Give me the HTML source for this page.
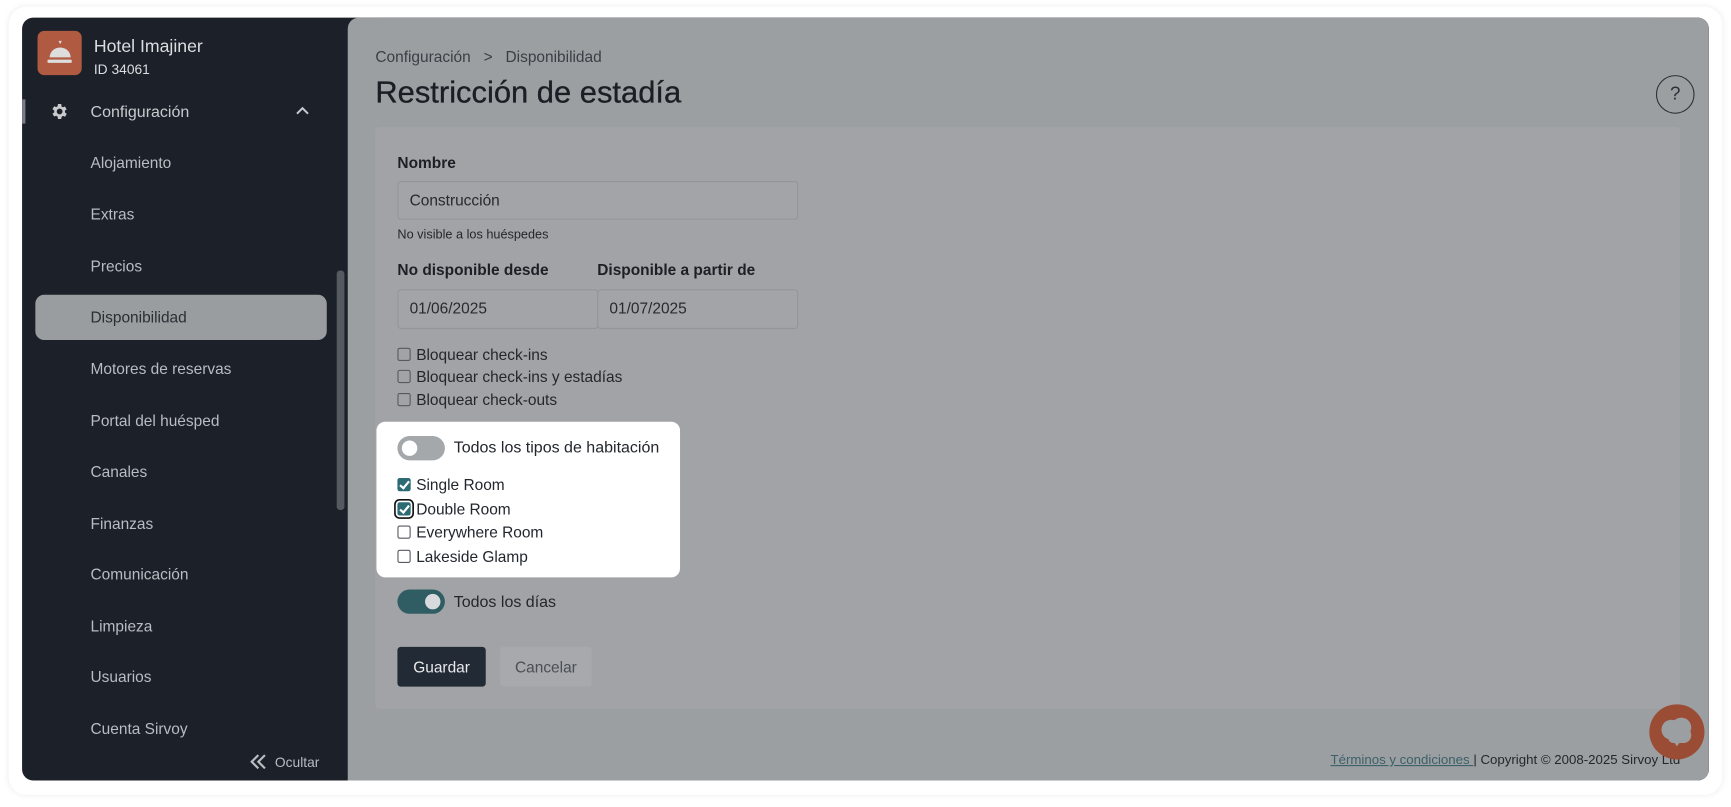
<!DOCTYPE html>
<html><head><meta charset="utf-8"><style>
*{box-sizing:border-box;margin:0;padding:0}
html,body{width:1731px;height:807px;overflow:hidden;background:#fff;font-family:"Liberation Sans",sans-serif}
#w{position:absolute;left:0;top:0;width:1568px;height:731px;transform:scale(1.10395);transform-origin:0 0}
.abs{position:absolute}
.outer{left:8px;top:6px;width:1552px;height:714px;border-radius:16px;background:#fff;box-shadow:0 0 6px rgba(0,0,0,.08)}
.frame{left:20px;top:16px;width:1528px;height:691px;border-radius:10px;background:#1b2029;overflow:hidden}
.main{left:295px;top:0;width:1233px;height:691px;background:#9c9fa2;border-radius:10px 0 0 0}
.mi{position:absolute;left:62px;font-size:14px;color:#b9bcc0;line-height:16px}
.lbl{position:absolute;font-size:14px;font-weight:bold;color:#1c2026}
.inp{position:absolute;background:#a3a4a7;border:1px solid #939699;border-radius:3px;font-size:14px;color:#262a30;padding-left:10px;line-height:33px}
.cb{position:absolute;font-size:14px;color:#23272d;line-height:16px}
.cb i{position:absolute;left:-17px;top:2px;width:12px;height:12px;border:1px solid #555a60;border-radius:2px;background:transparent}
.cb i.on{background:#2c6a74;border-color:#2c6a74}
.cb i.on:after{content:"";position:absolute;left:3px;top:0px;width:3px;height:7px;border:solid #fff;border-width:0 2px 2px 0;transform:rotate(40deg)}
</style></head><body><div id="w">
<div class="abs outer"></div>
<div class="abs frame">
 <div class="abs" style="left:14px;top:12px;width:40px;height:40px;border-radius:6px;background:#b05a42">
  <svg width="40" height="40" viewBox="0 0 40 40"><path d="M19 9h3l-1.5 3z" fill="#ddd"/><path d="M11 24a9.5 9 0 0 1 19 0z" fill="#ddd"/><rect x="9" y="26" width="22" height="3" rx="1" fill="#ddd"/></svg>
 </div>
 <div class="abs" style="left:65px;top:18px;font-size:16px;color:#dcdde0">Hotel Imajiner</div>
 <div class="abs" style="left:65px;top:40px;font-size:12.5px;color:#dcdde0">ID 34061</div>
 <div class="abs" style="left:0;top:74px;width:3px;height:22px;background:#7a7d82"></div>
 <svg class="abs" style="left:25px;top:76px" width="18" height="18" viewBox="0 0 24 24"><path fill="#c8cacd" d="M19.4 13a7.5 7.5 0 0 0 0-2l2.1-1.6-2-3.5-2.5 1a7 7 0 0 0-1.7-1L15 3h-4l-.4 2.7a7 7 0 0 0-1.7 1l-2.5-1-2 3.5L6.6 11a7.5 7.5 0 0 0 0 2l-2.2 1.6 2 3.5 2.5-1a7 7 0 0 0 1.7 1L11 21h4l.4-2.7a7 7 0 0 0 1.7-1l2.5 1 2-3.5zM13 15.5a3.5 3.5 0 1 1 0-7 3.5 3.5 0 0 1 0 7z" transform="translate(-1 0)"/></svg>
 <div class="mi" style="top:78px;color:#c8cacd;font-size:14.5px">Configuración</div>
 <svg class="abs" style="left:248px;top:80px" width="12" height="10"><path d="M1 7l5-5 5 5" stroke="#c8cacd" stroke-width="1.8" fill="none"/></svg>
 <div class="mi" style="top:123px">Alojamiento</div>
 <div class="mi" style="top:170px">Extras</div>
 <div class="mi" style="top:217px">Precios</div>
 <div class="abs" style="left:12px;top:251px;width:264px;height:41px;border-radius:8px;background:#9a9da0"></div>
 <div class="mi" style="top:263px;color:#2a2e34">Disponibilidad</div>
 <div class="mi" style="top:310px">Motores de reservas</div>
 <div class="mi" style="top:357px">Portal del huésped</div>
 <div class="mi" style="top:403px">Canales</div>
 <div class="mi" style="top:450px">Finanzas</div>
 <div class="mi" style="top:496px">Comunicación</div>
 <div class="mi" style="top:543px">Limpieza</div>
 <div class="mi" style="top:589px">Usuarios</div>
 <div class="mi" style="top:636px">Cuenta Sirvoy</div>
 <div class="abs" style="left:285px;top:229px;width:7px;height:217px;border-radius:3px;background:#555a61"></div>
 <svg class="abs" style="left:206px;top:667px" width="16" height="14"><path d="M8 1L2 7l6 6M14 1L8 7l6 6" stroke="#b9bcc0" stroke-width="2" fill="none"/></svg>
 <div class="abs" style="left:229px;top:668px;font-size:12.5px;color:#b9bcc0">Ocultar</div>
 <div class="abs main">
  <div class="abs" style="left:25px;top:27px;font-size:14px;color:#3a3f46">Configuración &nbsp;&nbsp;&gt;&nbsp;&nbsp; Disponibilidad</div>
  <div class="abs" style="left:25px;top:52px;font-size:28px;color:#1b1f25;-webkit-text-stroke:0.3px #1b1f25">Restricción de estadía</div>
  <div class="abs" style="left:1185px;top:52px;width:35px;height:35px;border:1.5px solid #2c3038;border-radius:50%;text-align:center;line-height:32px;font-size:17px;color:#2c3038">?</div>
  <div class="abs" style="left:25px;top:99px;width:1182px;height:527px;background:#a2a3a6;border-radius:4px"></div>
 </div>
 <div class="lbl" style="left:340px;top:123px">Nombre</div>
 <div class="inp" style="left:340px;top:148px;width:363px;height:35px">Construcción</div>
 <div class="abs" style="left:340px;top:191px;font-size:11.5px;color:#23272d">No visible a los huéspedes</div>
 <div class="lbl" style="left:340px;top:220px">No disponible desde</div>
 <div class="lbl" style="left:521px;top:220px">Disponible a partir de</div>
 <div class="inp" style="left:340px;top:246px;width:182px;height:36px">01/06/2025</div>
 <div class="inp" style="left:521px;top:246px;width:182px;height:36px">01/07/2025</div>
 <div class="cb" style="left:357px;top:297px"><i></i>Bloquear check-ins</div>
 <div class="cb" style="left:357px;top:317px"><i></i>Bloquear check-ins y estadías</div>
 <div class="cb" style="left:357px;top:338px"><i></i>Bloquear check-outs</div>
 <div class="abs" style="left:321px;top:366px;width:275px;height:141px;background:#fff;border-radius:8px"></div>
 <div class="abs" style="left:340px;top:379px;width:43px;height:22px;border-radius:11px;background:#a5a8ab"><div class="abs" style="left:4px;top:4px;width:14px;height:14px;border-radius:50%;background:#fff"></div></div>
 <div class="abs" style="left:391px;top:382px;font-size:14.5px;color:#23272d">Todos los tipos de habitación</div>
 <div class="cb" style="left:357px;top:415px"><i class="on"></i>Single Room</div>
 <div class="cb" style="left:357px;top:437px"><i class="on" style="box-shadow:0 0 0 1.5px #fff,0 0 0 3px #111"></i>Double Room</div>
 <div class="cb" style="left:357px;top:458px"><i></i>Everywhere Room</div>
 <div class="cb" style="left:357px;top:480px"><i></i>Lakeside Glamp</div>
 <div class="abs" style="left:340px;top:518px;width:43px;height:22px;border-radius:11px;background:#2f5d63"><div class="abs" style="left:25px;top:4px;width:14px;height:14px;border-radius:50%;background:#d8dadc"></div></div>
 <div class="abs" style="left:391px;top:522px;font-size:14.5px;color:#23272d">Todos los días</div>
 <div class="abs" style="left:340px;top:570px;width:80px;height:36px;background:#222a35;border-radius:3px;color:#e8e9eb;font-size:14px;text-align:center;line-height:36px">Guardar</div>
 <div class="abs" style="left:433px;top:570px;width:83px;height:36px;background:#a7a9ac;border-radius:3px;color:#4a4f55;font-size:14px;text-align:center;line-height:36px">Cancelar</div>
 <div class="abs" style="left:1100px;top:665px;width:402px;text-align:right;font-size:12px;color:#23272d"><span style="text-decoration:underline;color:#3b6068">Términos y condiciones </span>| Copyright © 2008-2025 Sirvoy Ltd</div>
 <div class="abs" style="left:1474px;top:622px;width:50px;height:50px;border-radius:50%;background:#9a4c35">
  <svg width="50" height="50"><circle cx="20" cy="23" r="9" fill="#9c9fa2"/><circle cx="29" cy="21" r="9" fill="#9c9fa2"/><circle cx="31" cy="28" r="7" fill="#9c9fa2"/><rect x="17" y="24" width="17" height="11" rx="5" fill="#9c9fa2"/><path d="M22 34l3 4 3-4z" fill="#9c9fa2"/></svg>
 </div>
</div>
</div></body></html>
